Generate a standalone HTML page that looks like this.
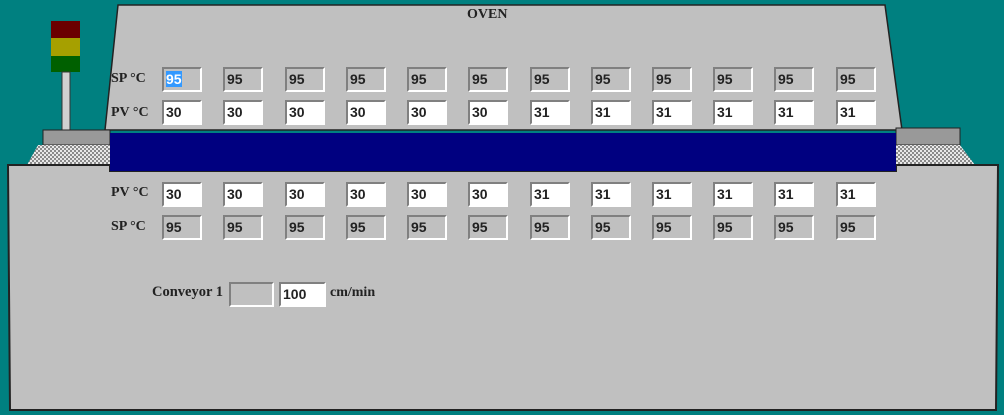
<!DOCTYPE html>
<html><head><meta charset="utf-8"><style>
body{margin:0;width:1004px;height:415px;background:#008080;position:relative;overflow:hidden;font-family:"Liberation Sans",sans-serif}
svg{position:absolute;left:0;top:0}
.f{position:absolute;width:40px;height:25px;box-sizing:border-box;border:2px solid;border-color:#808080 #fff #fff #808080;font-size:14px;line-height:21px;padding-left:2px;color:#222;font-weight:bold}
.sp{background:#c0c0c0}.pv{background:#fff}
.l{position:absolute;font-family:"Liberation Serif",serif;font-weight:bold;font-size:14px;color:#222}
</style></head><body>
<svg width="1004" height="415">
<defs><pattern id="h" width="4" height="4" patternUnits="userSpaceOnUse"><rect width="4" height="4" fill="#e8e8e8"/><rect width="2" height="2" fill="#8a8a8a"/><rect x="2" y="2" width="2" height="2" fill="#8a8a8a"/></pattern></defs>
<rect x="51" y="21" width="29" height="17" fill="#6b0000"/>
<rect x="51" y="38" width="29" height="18" fill="#a6a000"/>
<rect x="51" y="56" width="29" height="16" fill="#006000"/>
<rect x="62" y="72" width="8" height="58" fill="#d0d0d0" stroke="#333" stroke-width="1"/>
<polygon points="118,5 885,5 902,130 105,130" fill="#c0c0c0" stroke="#222" stroke-width="1.5"/>
<rect x="43" y="130" width="67" height="15" fill="#999" stroke="#222"/>
<rect x="896" y="128" width="64" height="17" fill="#999" stroke="#222"/>
<polygon points="38,145 110,145 110,165 27,165" fill="url(#h)"/>
<polygon points="896,145 960,145 975,165 896,165" fill="url(#h)"/>
<polygon points="8,165 110,165 110,171 896,171 896,165 998,165 996,410 10,410" fill="#c0c0c0" stroke="#222" stroke-width="2"/>
<rect x="110" y="133" width="786" height="38" fill="#000080"/>
</svg>
<div class="l" style="left:467px;top:7px">OVEN</div>
<div class="l" style="left:111px;top:71px">SP °C</div>
<div class="l" style="left:111px;top:105px">PV °C</div>
<div class="l" style="left:111px;top:185px">PV °C</div>
<div class="l" style="left:111px;top:219px">SP °C</div>
<div id="g"></div>
<div class="l" style="left:152px;top:284px;font-size:14.5px">Conveyor 1</div>
<div class="f sp" style="left:229px;top:282px;width:45px;height:25px"></div>
<div class="f pv" style="left:279px;top:282px;width:47px;height:25px">100</div>
<div class="l" style="left:330px;top:285px">cm/min</div>
<script>
var xs=[162,223,285,346,407,468,530,591,652,713,774,836],pu=[30,30,30,30,30,30,31,31,31,31,31,31],h='';
xs.forEach(function(x,i){
h+='<div class="f sp" style="left:'+x+'px;top:67px">'+(i==0?'<span style="background:#3399ff;color:#fff">95</span>':'95')+'</div>';
h+='<div class="f pv" style="left:'+x+'px;top:100px">'+pu[i]+'</div>';
h+='<div class="f pv" style="left:'+x+'px;top:182px">'+pu[i]+'</div>';
h+='<div class="f sp" style="left:'+x+'px;top:215px">95</div>';});
document.getElementById('g').innerHTML=h;
</script>
</body></html>
